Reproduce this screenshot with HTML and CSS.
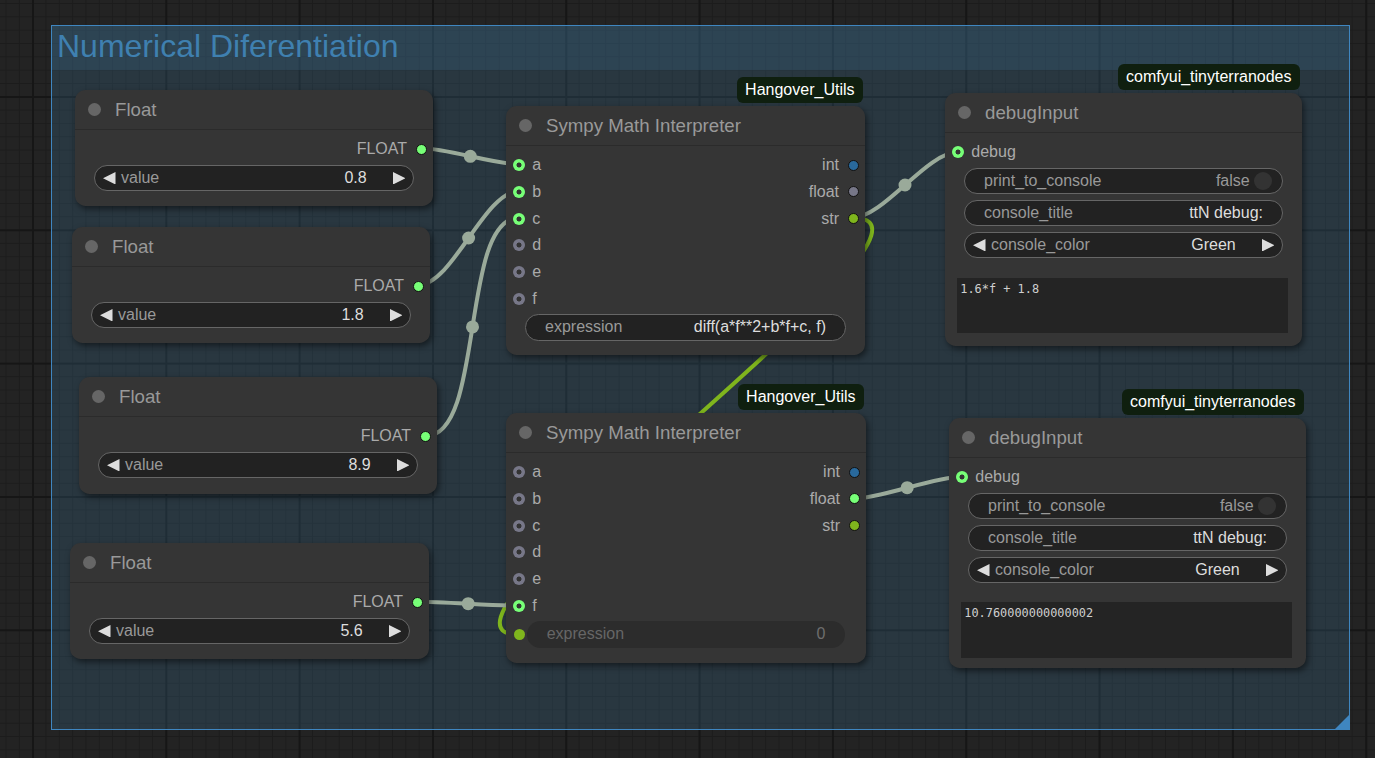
FILE: index.html
```html
<!DOCTYPE html>
<html lang="en">
<head>
<meta charset="utf-8">
<title>Numerical Diferentiation</title>
<link rel="stylesheet" href="styles.css">
</head>
<body>
<div class="canvas">
  <div class="group">
    <div class="group-title">Numerical Diferentiation</div>
    <div class="group-handle"></div>
  </div>

  <svg class="links" width="1375" height="758" viewBox="0 0 1375 758">
    <path class="link link-str" d="M852.7,217.7 C986.2,217.7 385.8,635 519.3,635"/>
    <path class="link" d="M421.7,148.3 C446.35,148.3 494.35,164.3 519,164.3"/>
    <path class="link" d="M418.3,285 C452.7,285 484.6,191 519,191"/>
    <path class="link" d="M426,436 C485.3,436 459.7,217.7 519,217.7"/>
    <path class="link" d="M417.3,601.7 C442.7,601.7 493.6,605.7 519,605.7"/>
    <path class="link" d="M852.7,217.7 C883.5,217.7 926.5,152.3 957.3,152.3"/>
    <path class="link" d="M852.7,498.7 C880.5,498.7 933.9,476.7 961.7,476.7"/>
    <circle class="marker" cx="470.3" cy="156.3" r="6.5"/>
    <circle class="marker" cx="468.6" cy="238" r="6.5"/>
    <circle class="marker" cx="472.5" cy="326.9" r="6.5"/>
    <circle class="marker" cx="468.2" cy="603.7" r="6.5"/>
    <circle class="marker" cx="905" cy="185" r="6.5"/>
    <circle class="marker" cx="907.2" cy="487.7" r="6.5"/>
  </svg>

  <!-- Float 1 -->
  <div class="node n-f1">
    <div class="node-title"><span class="title-dot"></span><span>Float</span></div>
    <div class="node-body">
      <div class="slot-row">
        <div class="slot-out c-green"><span class="label">FLOAT</span><span class="dot-out"></span></div>
      </div>
      <div class="widgets">
        <div class="widget w-number">
          <svg class="arrow" viewBox="0 0 12 12"><polygon points="12,0 0,6 12,12"/></svg>
          <span class="lbl">value</span><span class="val">0.8</span>
          <svg class="arrow arrow-r" viewBox="0 0 12 12"><polygon points="0,0 12,6 0,12"/></svg>
        </div>
      </div>
    </div>
  </div>

  <!-- Float 2 -->
  <div class="node n-f2">
    <div class="node-title"><span class="title-dot"></span><span>Float</span></div>
    <div class="node-body">
      <div class="slot-row">
        <div class="slot-out c-green"><span class="label">FLOAT</span><span class="dot-out"></span></div>
      </div>
      <div class="widgets">
        <div class="widget w-number">
          <svg class="arrow" viewBox="0 0 12 12"><polygon points="12,0 0,6 12,12"/></svg>
          <span class="lbl">value</span><span class="val">1.8</span>
          <svg class="arrow arrow-r" viewBox="0 0 12 12"><polygon points="0,0 12,6 0,12"/></svg>
        </div>
      </div>
    </div>
  </div>

  <!-- Float 3 -->
  <div class="node n-f3">
    <div class="node-title"><span class="title-dot"></span><span>Float</span></div>
    <div class="node-body">
      <div class="slot-row">
        <div class="slot-out c-green"><span class="label">FLOAT</span><span class="dot-out"></span></div>
      </div>
      <div class="widgets">
        <div class="widget w-number">
          <svg class="arrow" viewBox="0 0 12 12"><polygon points="12,0 0,6 12,12"/></svg>
          <span class="lbl">value</span><span class="val">8.9</span>
          <svg class="arrow arrow-r" viewBox="0 0 12 12"><polygon points="0,0 12,6 0,12"/></svg>
        </div>
      </div>
    </div>
  </div>

  <!-- Float 4 -->
  <div class="node n-f4">
    <div class="node-title"><span class="title-dot"></span><span>Float</span></div>
    <div class="node-body">
      <div class="slot-row">
        <div class="slot-out c-green"><span class="label">FLOAT</span><span class="dot-out"></span></div>
      </div>
      <div class="widgets">
        <div class="widget w-number">
          <svg class="arrow" viewBox="0 0 12 12"><polygon points="12,0 0,6 12,12"/></svg>
          <span class="lbl">value</span><span class="val">5.6</span>
          <svg class="arrow arrow-r" viewBox="0 0 12 12"><polygon points="0,0 12,6 0,12"/></svg>
        </div>
      </div>
    </div>
  </div>

  <!-- Sympy 1 -->
  <div class="node n-s1">
    <div class="badge">Hangover_Utils</div>
    <div class="node-title"><span class="title-dot"></span><span>Sympy Math Interpreter</span></div>
    <div class="node-body">
      <div class="slot-row">
        <div class="slot-in c-green"><span class="ring"></span><span class="label">a</span></div>
        <div class="slot-out c-blue"><span class="label">int</span><span class="dot-out"></span></div>
      </div>
      <div class="slot-row">
        <div class="slot-in c-green"><span class="ring"></span><span class="label">b</span></div>
        <div class="slot-out c-gray"><span class="label">float</span><span class="dot-out"></span></div>
      </div>
      <div class="slot-row">
        <div class="slot-in c-green"><span class="ring"></span><span class="label">c</span></div>
        <div class="slot-out c-olive"><span class="label">str</span><span class="dot-out"></span></div>
      </div>
      <div class="slot-row">
        <div class="slot-in c-gray"><span class="ring"></span><span class="label">d</span></div>
      </div>
      <div class="slot-row">
        <div class="slot-in c-gray"><span class="ring"></span><span class="label">e</span></div>
      </div>
      <div class="slot-row">
        <div class="slot-in c-gray"><span class="ring"></span><span class="label">f</span></div>
      </div>
      <div class="widgets">
        <div class="widget w-text">
          <span class="lbl">expression</span><span class="val">diff(a*f**2+b*f+c, f)</span>
        </div>
      </div>
    </div>
  </div>

  <!-- Sympy 2 -->
  <div class="node n-s2">
    <div class="badge">Hangover_Utils</div>
    <div class="node-title"><span class="title-dot"></span><span>Sympy Math Interpreter</span></div>
    <div class="node-body">
      <div class="slot-row">
        <div class="slot-in c-gray"><span class="ring"></span><span class="label">a</span></div>
        <div class="slot-out c-blue"><span class="label">int</span><span class="dot-out"></span></div>
      </div>
      <div class="slot-row">
        <div class="slot-in c-gray"><span class="ring"></span><span class="label">b</span></div>
        <div class="slot-out c-green"><span class="label">float</span><span class="dot-out"></span></div>
      </div>
      <div class="slot-row">
        <div class="slot-in c-gray"><span class="ring"></span><span class="label">c</span></div>
        <div class="slot-out c-olive"><span class="label">str</span><span class="dot-out"></span></div>
      </div>
      <div class="slot-row">
        <div class="slot-in c-gray"><span class="ring"></span><span class="label">d</span></div>
      </div>
      <div class="slot-row">
        <div class="slot-in c-gray"><span class="ring"></span><span class="label">e</span></div>
      </div>
      <div class="slot-row">
        <div class="slot-in c-green"><span class="ring"></span><span class="label">f</span></div>
      </div>
      <div class="widgets">
        <div class="exp-row">
          <span class="dot-solid"></span>
          <div class="widget w-text w-disabled">
            <span class="lbl">expression</span><span class="val">0</span>
          </div>
        </div>
      </div>
    </div>
  </div>

  <!-- debugInput 1 -->
  <div class="node n-d1">
    <div class="badge">comfyui_tinyterranodes</div>
    <div class="node-title"><span class="title-dot"></span><span>debugInput</span></div>
    <div class="node-body">
      <div class="slot-row">
        <div class="slot-in c-green"><span class="ring"></span><span class="label">debug</span></div>
      </div>
      <div class="widgets">
        <div class="widget w-toggle">
          <span class="lbl">print_to_console</span><span class="val">false</span><span class="knob"></span>
        </div>
        <div class="widget w-text">
          <span class="lbl">console_title</span><span class="val">ttN debug:</span>
        </div>
        <div class="widget w-number">
          <svg class="arrow" viewBox="0 0 12 12"><polygon points="12,0 0,6 12,12"/></svg>
          <span class="lbl">console_color</span><span class="val">Green</span>
          <svg class="arrow arrow-r" viewBox="0 0 12 12"><polygon points="0,0 12,6 0,12"/></svg>
        </div>
      </div>
      <div class="console">1.6*f + 1.8</div>
    </div>
  </div>

  <!-- debugInput 2 -->
  <div class="node n-d2">
    <div class="badge">comfyui_tinyterranodes</div>
    <div class="node-title"><span class="title-dot"></span><span>debugInput</span></div>
    <div class="node-body">
      <div class="slot-row">
        <div class="slot-in c-green"><span class="ring"></span><span class="label">debug</span></div>
      </div>
      <div class="widgets">
        <div class="widget w-toggle">
          <span class="lbl">print_to_console</span><span class="val">false</span><span class="knob"></span>
        </div>
        <div class="widget w-text">
          <span class="lbl">console_title</span><span class="val">ttN debug:</span>
        </div>
        <div class="widget w-number">
          <svg class="arrow" viewBox="0 0 12 12"><polygon points="12,0 0,6 12,12"/></svg>
          <span class="lbl">console_color</span><span class="val">Green</span>
          <svg class="arrow arrow-r" viewBox="0 0 12 12"><polygon points="0,0 12,6 0,12"/></svg>
        </div>
      </div>
      <div class="console console-2">10.760000000000002</div>
    </div>
  </div>
</div>
</body>
</html>
```
FILE: styles.css
```css
* { box-sizing: border-box; }

html, body { margin: 0; padding: 0; }

body {
  width: 1375px;
  height: 758px;
  overflow: hidden;
  font-family: "Liberation Sans", Arial, sans-serif;
  background-color: #232323;
  background-image:
    linear-gradient(to right, #161616 0 2px, transparent 2px),
    linear-gradient(to bottom, #161616 0 2px, transparent 2px),
    linear-gradient(to right, #1c1c1c 0 1px, transparent 1px),
    linear-gradient(to bottom, #1c1c1c 0 1px, transparent 1px);
  background-size: 133.333px 133.333px, 133.333px 133.333px, 13.333px 13.333px, 13.333px 13.333px;
  background-position: 32px 96px, 32px 96px, 5.5px 3px, 5.5px 3px;
}

.canvas {
  position: relative;
  width: 1375px;
  height: 758px;
}

/* ---------- group ---------- */
.group {
  position: absolute;
  left: 51px;
  top: 25px;
  width: 1299px;
  height: 705px;
  border: 1px solid #3f86c0;
  background: rgba(63, 120, 158, 0.24);
}

.group-title {
  height: 44px;
  padding: 1.5px 0 0 5px;
  font-size: 32px;
  color: #3f80b0;
  background: rgba(63, 120, 158, 0.2);
  white-space: nowrap;
}

.group-handle {
  position: absolute;
  right: 0;
  bottom: 0;
  width: 14px;
  height: 14px;
  background: #3f86c0;
  clip-path: polygon(100% 0, 100% 100%, 0 100%);
}

/* ---------- links ---------- */
.links {
  position: absolute;
  left: 0;
  top: 0;
}

.link {
  fill: none;
  stroke: #9aaa9a;
  stroke-width: 4;
  stroke-linecap: round;
}

.link-str { stroke: #7fb51d; }

.marker { fill: #9aaa9a; }

/* ---------- nodes ---------- */
.node {
  position: absolute;
  background: #353535;
  border-radius: 10.67px;
  box-shadow: 2px 3px 6px rgba(0, 0, 0, 0.5);
}

.n-f1 { left: 75px; top: 90px; width: 358px; height: 116px; }
.n-f2 { left: 72px; top: 227px; width: 358px; height: 116px; }
.n-f3 { left: 79px; top: 377px; width: 358px; height: 117px; }
.n-f4 { left: 70px; top: 543px; width: 359px; height: 116px; }
.n-s1 { left: 506px; top: 106px; width: 359px; height: 249px; }
.n-s2 { left: 506px; top: 413px; width: 360px; height: 250px; }
.n-d1 { left: 945px; top: 93px; width: 357px; height: 253px; }
.n-d2 { left: 949px; top: 418px; width: 357px; height: 250px; }

.node-title {
  height: 40px;
  display: flex;
  align-items: center;
  padding-left: 13px;
  border-bottom: 1px solid #2b2b2b;
  color: #999;
  font-size: 18.67px;
  white-space: nowrap;
}

.title-dot {
  flex: none;
  width: 13px;
  height: 13px;
  border-radius: 50%;
  background: #666;
  margin-right: 14px;
}

.badge {
  position: absolute;
  top: -29.5px;
  right: 2.5px;
  height: 26px;
  line-height: 26px;
  padding: 0 8px;
  border-radius: 6px;
  background: #0f1f0f;
  color: #fff;
  font-size: 16px;
  white-space: nowrap;
}

.node-body {
  padding-top: 6px;
}

/* ---------- slots ---------- */
.c-green { --c: #7f7; }
.c-gray { --c: #778; }
.c-blue { --c: #29699c; }
.c-olive { --c: #7fb51d; }

.slot-row {
  height: 26.67px;
  display: flex;
  align-items: center;
  font-size: 16px;
  color: #aaa;
  white-space: nowrap;
}

.slot-in {
  display: flex;
  align-items: center;
  padding-left: 6.8px;
}

.ring {
  flex: none;
  width: 12px;
  height: 12px;
  border-radius: 50%;
  background: radial-gradient(circle, #333 0 2.2px, var(--c) 2.8px);
}

.slot-in .label { margin-left: 7.5px; }

.slot-out {
  display: flex;
  align-items: center;
  margin-left: auto;
  padding-right: 6.5px;
}

.slot-out .label { margin-right: 8.5px; }

.dot-out {
  flex: none;
  width: 11px;
  height: 11px;
  border-radius: 50%;
  border: 1px solid #111;
  background: var(--c);
}

/* ---------- widgets ---------- */
.widgets {
  margin-top: 2px;
  padding: 0 19px;
  display: flex;
  flex-direction: column;
  gap: 5.33px;
}

.widget {
  height: 26.67px;
  display: flex;
  align-items: center;
  border: 1px solid #666;
  border-radius: 13.33px;
  background: #222;
  color: #999;
  font-size: 16px;
  white-space: nowrap;
}

.widget .val {
  margin-left: auto;
  color: #ddd;
}

.arrow {
  flex: none;
  width: 12.5px;
  height: 12.5px;
  fill: #ddd;
  margin-left: 8.3px;
}

.arrow-r {
  margin-left: 0;
  margin-right: 7.8px;
}

.w-number .lbl { margin-left: 5.2px; }
.w-number .val { margin-right: 26px; }

.w-text .lbl { margin-left: 19px; }
.w-text .val { margin-right: 19px; }

.w-toggle .lbl { margin-left: 19px; }
.w-toggle .val {
  color: #999;
  margin-right: 4px;
}

.knob {
  flex: none;
  width: 18.6px;
  height: 18.6px;
  border-radius: 50%;
  background: #333;
  margin-right: 9.7px;
}

.exp-row {
  display: flex;
  align-items: center;
  margin-left: -11.4px;
  margin-right: 1.7px;
}

.dot-solid {
  flex: none;
  width: 11.3px;
  height: 11.3px;
  border-radius: 50%;
  background: #7fb51d;
  margin-right: 1.8px;
}

.exp-row .widget { flex: 1; }

.w-disabled {
  border-color: transparent;
  background: #2c2c2c;
  color: #666;
}

.w-disabled .val { color: #6e6e6e; }

/* ---------- console output ---------- */
.console {
  margin: 20px 14px 0 12.3px;
  height: 55px;
  padding: 4px 3px;
  background: #242424;
  color: #cfcfcf;
  font-family: "DejaVu Sans Mono", "Liberation Mono", monospace;
  font-size: 11.9px;
  white-space: pre;
}

.console-2 {
  margin-top: 18.5px;
  height: 56px;
}
```
